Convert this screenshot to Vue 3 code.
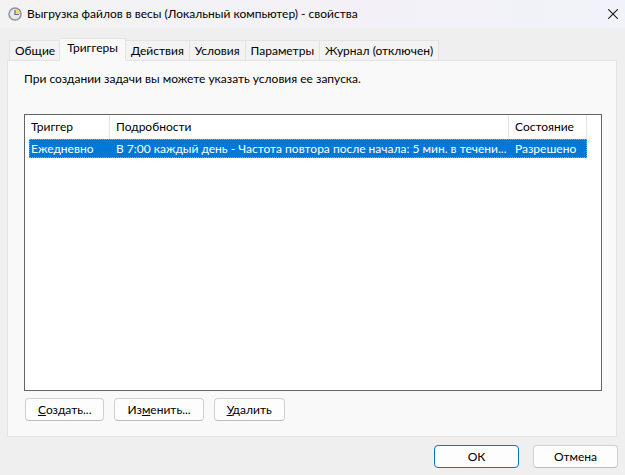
<script setup>
import { ref } from 'vue'

const tabs = ['Общие', 'Триггеры', 'Действия', 'Условия', 'Параметры', 'Журнал (отключен)']
const active = ref('Триггеры')

const triggers = [
  {
    name: 'Ежедневно',
    details: 'В 7:00 каждый день - Частота повтора после начала: 5 мин. в течени...',
    state: 'Разрешено',
  },
]
</script>

<template>
  <main class="dialog">
    <header class="titlebar">
      <svg class="clock" viewBox="0 0 14 14" aria-hidden="true">
        <circle cx="7" cy="7" r="6" fill="#e2eaf3" stroke="#929292" stroke-width="1.500" />
        <path d="M7 7V2a5 5 0 0 1 5 5z" fill="#f7d489" />
        <path d="M7 3v4.500h4" fill="none" stroke="#5c6f88" stroke-width="1.200" />
      </svg>
      <h1 class="title">Выгрузка файлов в весы (Локальный компьютер) - свойства</h1>
      <button class="close" type="button" aria-label="Закрыть">
        <svg viewBox="0 0 10 10" aria-hidden="true">
          <path d="M0.300 0.300l9.400 9.400M9.700 0.300l-9.400 9.400" fill="none" stroke="#1a1a1a" stroke-width="1.100" />
        </svg>
      </button>
    </header>

    <div class="tabs" role="tablist">
      <button
        v-for="tab in tabs"
        :key="tab"
        class="tab"
        :class="{ active: tab === active }"
        type="button"
        role="tab"
        :aria-selected="tab === active"
        @click="active = tab"
      >{{ tab }}</button>
    </div>

    <section class="panel" role="tabpanel">
      <p class="hint">При создании задачи вы можете указать условия ее запуска.</p>
      <div class="list">
        <table>
          <colgroup>
            <col class="col-name" />
            <col />
            <col class="col-state" />
          </colgroup>
          <thead>
            <tr><th>Триггер</th><th>Подробности</th><th>Состояние</th></tr>
          </thead>
          <tbody>
            <tr v-for="t in triggers" :key="t.name" class="selected">
              <td>{{ t.name }}</td>
              <td>{{ t.details }}</td>
              <td>{{ t.state }}</td>
            </tr>
          </tbody>
        </table>
      </div>
      <div class="actions">
        <button class="btn" type="button"><u>С</u>оздать...</button>
        <button class="btn" type="button">Из<u>м</u>енить...</button>
        <button class="btn" type="button"><u>У</u>далить</button>
      </div>
    </section>

    <footer class="footer">
      <button class="btn wide primary" type="button">ОК</button>
      <button class="btn wide" type="button">Отмена</button>
    </footer>
  </main>
</template>

<style>
body {
  background: #efefef;
}
</style>

<style scoped>
.dialog {
  box-sizing: border-box;
  min-height: 100vh;
  display: flex;
  flex-direction: column;
  background: #efefef;
  color: #000;
  font: 12px/16px Lato, "Noto Sans", sans-serif;
}
button {
  font: inherit;
  color: inherit;
  margin: 0;
}
.titlebar {
  display: flex;
  align-items: center;
  height: 28px;
  padding: 0 7px 0 8px;
  background: linear-gradient(90deg, #f3f3f3, #f3f1f7 60%, #f0f3f9);
}
.clock {
  width: 14px;
  height: 14px;
}
.title {
  flex: 1;
  margin: 0 0 0 5px;
  font-size: 12px;
  font-weight: 400;
  white-space: nowrap;
}
.close {
  display: flex;
  padding: 0;
  border: 0;
  background: none;
}
.close svg {
  width: 10px;
  height: 10px;
}
.tabs {
  display: flex;
  align-items: flex-end;
  padding: 10px 9px 0;
}
.tab {
  height: 20px;
  padding: 1px 5px 0;
  border: 1px solid #e3e3e3;
  border-width: 1px 1px 0 0;
  background: #f3f3f3;
  line-height: 16px;
  white-space: nowrap;
}
.tab:first-child {
  padding-right: 4px;
  border-left-width: 1px;
}
.tab.active {
  height: 23px;
  padding: 0 7px 3px;
  margin-bottom: -1px;
  border-bottom: 1px solid #f9f9f9;
  background: #f9f9f9;
  position: relative;
}
.panel {
  flex: 1;
  display: flex;
  flex-direction: column;
  margin: 0 8px 0 7px;
  padding: 10px 14px 15px 16px;
  border: 1px solid #e3e3e3;
  background: #f9f9f9;
}
.hint {
  margin: 0 0 27px;
}
.list {
  flex: 1;
  padding: 0 14px 0 4px;
  border: 1px solid #646464;
  background: #fff;
}
table {
  width: 100%;
  table-layout: fixed;
  border-collapse: separate;
  border-spacing: 0;
}
.col-name {
  width: 81px;
}
.col-state {
  width: 78px;
}
th,
td {
  padding: 0 0 0 6px;
  overflow: hidden;
  text-align: left;
  text-overflow: ellipsis;
  white-space: nowrap;
  font-weight: 400;
}
th {
  height: 24px;
  border-right: 1px solid #e5e5e5;
}
th:first-child,
td:first-child {
  padding-left: 2px;
}
.selected {
  background: #0078d7;
  color: #fff;
  outline: 1px dotted #ff8728;
  outline-offset: -1px;
}
td {
  height: 19px;
}
.actions {
  display: flex;
  gap: 10px;
  margin: 7px 0 0 1px;
}
.btn {
  height: 23px;
  padding: 0 12px;
  border: 1px solid #d0d0d0;
  border-bottom-color: #bcbcbc;
  border-radius: 4px;
  background: #fdfdfd;
  line-height: 16px;
}
.wide {
  width: 85px;
}
.primary {
  border-color: #0078d4;
}
.footer {
  display: flex;
  justify-content: flex-end;
  gap: 14px;
  padding: 8px 7px 7px;
}
</style>
